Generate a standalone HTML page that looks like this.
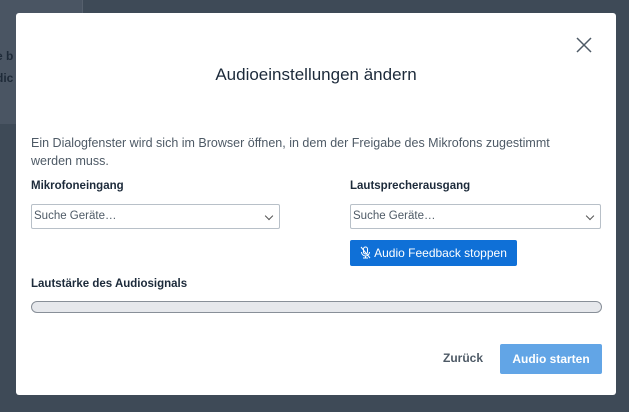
<!DOCTYPE html><html><head><style>
body{margin:0;width:629px;height:412px;background:#3e4a57;position:relative;overflow:hidden;font-family:"Liberation Sans",sans-serif}
.bgl{position:absolute;left:0;top:0;width:82px;height:124px;background:#4a5563;border-right:1px solid #56606d}
.bgt{position:absolute;left:-4px;color:#1e2a38;font-size:12px;font-weight:bold}
.m{position:absolute;left:16px;top:13px;width:600px;height:382px;background:#fff;border-radius:3px}
.a{position:absolute}
.t{left:0;width:600px;top:52px;text-align:center;font-size:17px;color:#1c2a3a}
.p{left:15px;top:121px;width:545px;font-size:12.5px;line-height:18px;color:#4e5a66}
.l{font-size:11.5px;font-weight:bold;color:#1c2a3a}
.s{height:25px;border:1px solid #b8c0c8;border-radius:2px;font-size:11.5px;color:#4e5a66;box-sizing:border-box;padding:5px 2px}
.s:after{content:"";position:absolute;right:7px;top:8px;width:5px;height:5px;border-right:1.2px solid #555;border-bottom:1.2px solid #555;transform:rotate(45deg)}
</style></head><body>
<div class="bgl"></div>
<div class="bgt" style="top:49px">e b</div><div class="bgt" style="top:71px">dic</div><div class="bgt" style="top:93px">.</div>
<div class="m">
<svg class="a" style="left:560px;top:24px" width="16" height="16"><path d="M1 1L15 15M15 1L1 15" stroke="#4e5a66" stroke-width="1.5"/></svg>
<div class="a t">Audioeinstellungen ändern</div>
<div class="a p">Ein Dialogfenster wird sich im Browser öffnen, in dem der Freigabe des Mikrofons zugestimmt werden muss.</div>
<div class="a l" style="left:15px;top:167px">Mikrofoneingang</div>
<div class="a l" style="left:334px;top:167px">Lautsprecherausgang</div>
<div class="a s" style="left:15px;top:191px;width:249px">Suche Geräte…</div>
<div class="a s" style="left:334px;top:191px;width:251px">Suche Geräte…</div>
<div class="a" style="left:334px;top:227px;width:167px;height:26px;background:#0f70d7;border-radius:2px;color:#fff;font-size:12px;line-height:26px;text-align:center"><svg width="11" height="13" style="vertical-align:-2px;margin-right:3px" viewBox="0 0 11 13"><rect x="3.5" y="1" width="4" height="7" rx="2" fill="none" stroke="#fff" stroke-width="1"/><path d="M1.5 6a4 4 0 0 0 8 0M5.5 10v2M3 12h5M1 1l9 11" fill="none" stroke="#fff" stroke-width="1"/></svg>Audio Feedback stoppen</div>
<div class="a l" style="left:15px;top:265px">Lautstärke des Audiosignals</div>
<div class="a" style="left:15px;top:288px;width:569px;height:10px;background:#e6e8ec;border:1px solid #888f98;border-radius:6px"></div>
<div class="a" style="left:427px;top:338px;font-size:12px;font-weight:bold;color:#4e5a66">Zurück</div>
<div class="a" style="left:484px;top:331px;width:102px;height:30px;background:#62a5e6;border-radius:2px;color:#fff;font-size:12px;font-weight:bold;line-height:30px;text-align:center">Audio starten</div>
</div>
</body></html>
